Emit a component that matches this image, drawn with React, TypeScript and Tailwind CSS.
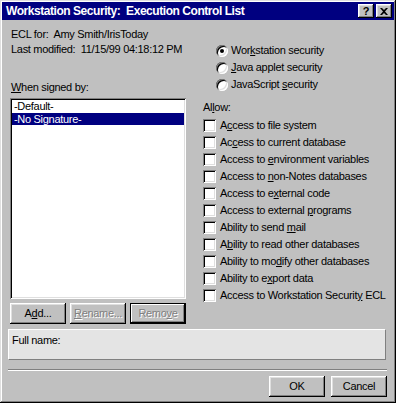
const RAISED =
  "shadow-[inset_-1px_-1px_0_#000,inset_1px_1px_0_#fff,inset_-2px_-2px_0_#808080,inset_2px_2px_0_#dfdfdf]";
const SUNKEN =
  "shadow-[inset_1px_1px_0_#808080,inset_-1px_-1px_0_#fff,inset_2px_2px_0_#000,inset_-2px_-2px_0_#dfdfdf]";

function U({ children }: { children: string }) {
  return <span className="underline underline-offset-[1px] decoration-1">{children}</span>;
}

function Radio({ checked, children }: { checked?: boolean; children: React.ReactNode }) {
  return (
    <div className="flex items-center h-[17px]">
      <div
        className={
          "w-[12px] h-[12px] rounded-full bg-white flex items-center justify-center " + SUNKEN
        }
      >
        {checked && <div className="w-[4px] h-[4px] rounded-full bg-black" />}
      </div>
      <span className="ml-[3px]">{children}</span>
    </div>
  );
}

function Check({ children }: { children: React.ReactNode }) {
  return (
    <div className="flex items-center h-[17px]">
      <div className={"w-[13px] h-[13px] bg-white shrink-0 " + SUNKEN} />
      <span className="ml-[4px] whitespace-nowrap">{children}</span>
    </div>
  );
}

function Btn({
  children,
  disabled,
  isDefault,
}: {
  children: React.ReactNode;
  disabled?: boolean;
  isDefault?: boolean;
}) {
  return (
    <div
      className={
        "w-[56px] h-[21px] flex items-center justify-center bg-[#c0c0c0] " +
        (isDefault
          ? "shadow-[inset_0_0_0_1px_#000,inset_-2px_-2px_0_#000,inset_2px_2px_0_#fff,inset_-3px_-3px_0_#808080]"
          : RAISED) +
        (disabled ? " text-[#808080] [text-shadow:1px_1px_0_#fff]" : " text-black")
      }
    >
      {children}
    </div>
  );
}

const ALLOW: React.ReactNode[] = [
  <>A<U>c</U>cess to file system</>,
  <>Ac<U>c</U>ess to current database</>,
  <>Access to <U>e</U>nvironment variables</>,
  <>Access to <U>n</U>on-Notes databases</>,
  <>Access to e<U>x</U>ternal code</>,
  <>Access to external <U>p</U>rograms</>,
  <>Ability to send <U>m</U>ail</>,
  <>A<U>b</U>ility to read other databases</>,
  <>Ability to mo<U>d</U>ify other databases</>,
  <>Ability to e<U>x</U>port data</>,
  <>Access to Workstation Securit<U>y</U> ECL</>,
];

export default function App() {
  return (
    <div
      className={
        "w-[396px] h-[403px] bg-[#c0c0c0] p-[2px] flex flex-col text-[11px] leading-[13px] tracking-[-0.3px] text-black font-['Liberation_Sans',Arial,sans-serif] shadow-[inset_-1px_-1px_0_#000,inset_1px_1px_0_#dfdfdf,inset_-2px_-2px_0_#808080,inset_2px_2px_0_#fff]"
      }
    >
      {/* title bar */}
      <div className="h-[18px] bg-[#000080] flex items-center pl-[4px] pr-[2px]">
        <span className="text-white font-bold text-[12px] tracking-[-0.45px] whitespace-pre flex-1">
          Workstation Security:  Execution Control List
        </span>
        <div
          className={
            "w-[16px] h-[14px] bg-[#c0c0c0] text-black flex items-center justify-center font-bold text-[11px] " +
            RAISED
          }
        >
          ?
        </div>
        <div className={"w-[16px] h-[14px] ml-[2px] bg-[#c0c0c0] flex items-center justify-center " + RAISED}>
          <svg width="8" height="7" viewBox="0 0 8 7">
            <path d="M0 0h2l2 2 2-2h2L5 3.5 8 7H6L4 5 2 7H0l3-3.5z" fill="#000" />
          </svg>
        </div>
      </div>

      <div className="flex pl-[8px]">
        {/* left column */}
        <div className="w-[176px] flex flex-col">
          <div className="mt-[7px] h-[15px] leading-[15px] pl-[1px] whitespace-pre">ECL for:  Amy Smith/IrisToday</div>
          <div className="h-[15px] leading-[15px] pl-[1px] whitespace-pre">Last modified:  11/15/99 04:18:12 PM</div>
          <div className="mt-[23px] h-[15px] leading-[15px] pl-[1px]">
            <U>W</U>hen signed by:
          </div>
          <div className={"mt-[3px] h-[201px] bg-white p-[2px] " + SUNKEN}>
            <div className="h-[13px] leading-[13px] pl-[2px]">-Default-</div>
            <div className="h-[12px] leading-[12px] pl-[2px] bg-[#000080] text-white">-No Signature-</div>
          </div>
          <div className="mt-[4px] flex gap-[4px]">
            <Btn>
              A<U>d</U>d...
            </Btn>
            <Btn disabled>
              <U>R</U>ename...
            </Btn>
            <Btn disabled isDefault>
              Remo<U>v</U>e
            </Btn>
          </div>
        </div>

        {/* right column */}
        <div className="ml-[17px] flex flex-col">
          <div className="mt-[22px] pl-[13px]">
            <Radio checked>
              Wor<U>k</U>station security
            </Radio>
            <Radio>
              <U>J</U>ava applet security
            </Radio>
            <Radio>
              JavaScript <U>s</U>ecurity
            </Radio>
          </div>
          <div className="mt-[7px] h-[15px] leading-[15px]">
            Al<U>l</U>ow:
          </div>
          <div className="mt-[2px]">
            {ALLOW.map((a, i) => (
              <Check key={i}>{a}</Check>
            ))}
          </div>
        </div>
      </div>

      {/* full name panel */}
      <div className="mt-[5px] ml-[6px] mr-[8px] h-[31px] bg-[#e4e4e4] border-t border-l border-white border-b border-r border-b-[#808080] border-r-[#808080] pl-[3px] pt-[4px]">
        Full name:
      </div>

      <div className="mt-[9px] ml-[6px] mr-[7px] h-[2px] border-t border-[#808080] border-b border-b-white" />

      <div className="mt-[5px] flex justify-end gap-[6px] pr-[7px]">
        <Btn>OK</Btn>
        <Btn>Cancel</Btn>
      </div>
    </div>
  );
}
